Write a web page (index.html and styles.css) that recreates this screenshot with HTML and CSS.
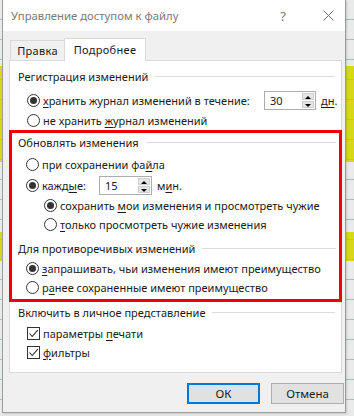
FILE: index.html
```html
<!DOCTYPE html>
<html lang="ru">
<head>
<meta charset="utf-8">
<link rel="stylesheet" href="styles.css">
</head>
<body>
<div class="dialog">
  <div class="titlebar">
    <span class="title">Управление доступом к файлу</span>
    <span class="help">?</span>
    <svg class="close" width="11" height="11" viewBox="0 0 11 11"><path d="M0.5 0.5 L10.5 10.5 M10.5 0.5 L0.5 10.5" stroke="#6b6b6b" stroke-width="1" fill="none"/></svg>
  </div>
  <div class="tabs">
    <div class="tab">Правка</div>
    <div class="tab active">Подробнее</div>
  </div>
  <div class="panel">
    <div class="group"><span>Регистрация изменений</span><i></i></div>
    <div class="row r1">
      <span class="opt w-keep"><b class="radio on"></b><span><u>х</u>ранить журнал изменений в течение:</span></span>
      <span class="spin s-days"><span class="val">30</span><span class="btns"><span class="up"></span><span class="dn"></span></span></span>
      <span class="unit"><u>дн</u>.</span>
    </div>
    <div class="row r2"><span class="opt"><b class="radio"></b><span>не хранить <u>ж</u>урнал изменений</span></span></div>

    <div class="mark">
      <div class="group g2"><span>Обновлять изменения</span><i></i></div>
      <div class="row ra"><span class="opt"><b class="radio"></b><span>при сохранении фа<u>й</u>ла</span></span></div>
      <div class="row rb">
        <span class="opt w-each"><b class="radio on"></b><span>кажд<u>ы</u>е:</span></span>
        <span class="spin s-min"><span class="val">15</span><span class="btns"><span class="up"></span><span class="dn"></span></span></span>
        <span class="unit">м<u>и</u>н.</span>
      </div>
      <div class="row sub"><span class="opt"><b class="radio on"></b><span>сохранить <u>м</u>ои изменения и просмотреть чужие</span></span></div>
      <div class="row sub"><span class="opt"><b class="radio"></b><span><u>т</u>олько просмотреть чужие изменения</span></span></div>
      <div class="group g3"><span>Для противоречивых изменений</span><i></i></div>
      <div class="row rc"><span class="opt"><b class="radio on"></b><span><u>з</u>апрашивать, чьи изменения имеют преимущество</span></span></div>
      <div class="row rd"><span class="opt"><b class="radio"></b><span>р<u>а</u>нее сохраненные имеют преимущество</span></span></div>
    </div>

    <div class="group g4"><span>Включить в личное представление</span><i></i></div>
    <div class="row c1"><span class="opt"><b class="check"><svg width="11" height="11" viewBox="0 0 11 11"><path d="M1.5 5.5 L4.2 8.5 L9.8 2.2" stroke="#2b2b2b" stroke-width="1.1" fill="none"/></svg></b><span>параметры <u>п</u>ечати</span></span></div>
    <div class="row c2"><span class="opt"><b class="check"><svg width="11" height="11" viewBox="0 0 11 11"><path d="M1.5 5.5 L4.2 8.5 L9.8 2.2" stroke="#2b2b2b" stroke-width="1.1" fill="none"/></svg></b><span><u>ф</u>ильтры</span></span></div>
  </div>
  <div class="buttons">
    <button class="btn default">ОК</button>
    <button class="btn">Отмена</button>
  </div>
</div>
</body>
</html>
```
FILE: styles.css
```css
* { box-sizing: border-box; }
html, body { margin: 0; padding: 0; }
body {
  width: 354px;
  height: 416px;
  overflow: hidden;
  font-family: "Noto Sans", "Open Sans", sans-serif;
  font-size: 11px;
  color: #1b1b1b;
  background:
    repeating-linear-gradient(to bottom, transparent 0 19px, #a9bfae 19px 20px),
    linear-gradient(to bottom, transparent 0 66px, #d7d71c 66px 162px, transparent 162px 232px, #d7d71c 232px 261px, transparent 261px),
    #e9ebea;
}
.dialog {
  margin-left: 2px;
  width: 344px;
  height: 413px;
  background: #f0f0f0;
  border: 1px solid #9c9c9c;
  border-top: none;
  box-shadow: 1px 1px 2px rgba(0,0,0,0.15);
}
.titlebar {
  height: 31px;
  background: #fff;
  display: flex;
  align-items: center;
  padding-left: 8px;
}
.title { color: #7a7a7a; font-size: 11.3px; flex: 1; }
.help { color: #7a7a7a; font-size: 13px; margin-right: 37px; }
.close { margin-right: 11px; }
.tabs {
  display: flex;
  align-items: flex-end;
  padding-left: 7px;
  height: 29px;
}
.tab {
  height: 20px;
  width: 54px;
  border: 1px solid #d9d9d9;
  border-right: none;
  border-bottom: none;
  display: flex;
  align-items: center;
  justify-content: center;
  letter-spacing: 0.3px;
}
.tab.active {
  height: 23px;
  width: 82px;
  background: #fff;
  border-right: 1px solid #d9d9d9;
  margin-bottom: -1px;
  position: relative;
  z-index: 1;
  align-items: flex-start;
  padding-top: 3px;
}
.panel {
  margin-left: 6px;
  width: 333px;
  height: 313px;
  background: #fff;
  border: 1px solid #d9d9d9;
  padding: 5px 0 0 0;
}
.group {
  display: flex;
  align-items: center;
  height: 20px;
  padding: 0 6px 0 8px;
}
.group i {
  flex: 1;
  height: 1px;
  background: #dcdcdc;
  margin-left: 7px;
  margin-top: 1px;
}
.row {
  display: flex;
  align-items: center;
  height: 20px;
  padding-left: 17px;
}
.r1 { margin-top: 4px; }
.opt { display: flex; align-items: center; white-space: nowrap; }
.opt > span { margin-left: 3px; }
.w-keep { width: 237px; }
.w-each { width: 73px; }
.radio {
  width: 13px;
  height: 13px;
  border: 1px solid #333;
  border-radius: 50%;
  background: #fff;
  display: flex;
  align-items: center;
  justify-content: center;
  flex: none;
}
.radio.on::after {
  content: "";
  width: 7px;
  height: 7px;
  border-radius: 50%;
  background: #333;
}
.check {
  width: 13px;
  height: 13px;
  border: 1px solid #333;
  background: #fff;
  display: flex;
  align-items: center;
  justify-content: center;
  flex: none;
}
.check svg { display: block; }
.spin {
  display: flex;
  align-items: stretch;
  border: 1px solid #adadad;
  background: #fff;
  height: 19px;
  padding: 1px;
  flex: none;
}
.s-days { width: 52px; }
.s-min { width: 53px; height: 19px; }
.spin .val { flex: 1; padding-left: 4px; line-height: 15px; }
.btns { width: 12px; display: flex; flex-direction: column; gap: 1px; }
.btns span {
  flex: 1;
  background: #e5e5e5;
  border: 1px solid #cfcfcf;
  position: relative;
}
.btns .up::after, .btns .dn::after {
  content: "";
  position: absolute;
  left: 2px;
  border-left: 3px solid transparent;
  border-right: 3px solid transparent;
}
.btns .up::after { top: 2px; border-bottom: 3px solid #000; }
.btns .dn::after { top: 2px; border-top: 3px solid #000; }
.unit { margin-left: 5px; }
.mark {
  margin: 0 -1px;
  border: 3px solid #f00000;
  padding: 0 0 2px 0;
}
.mark .group { height: 18px; padding-left: 6px; padding-right: 3px; }
.mark .row { padding-left: 14px; }
.mark .ra { margin-top: 3px; }
.mark .rb { margin-top: 1px; }
.mark .sub { padding-left: 32px; height: 19px; }
.mark .rb + .sub { margin-top: 1px; }
.mark .g3 { margin-top: 4px; height: 20px; }
.mark .rc { margin-top: 1px; height: 19px; }
.mark .rd { height: 19px; }
.g4 { height: 20px; }
.c1 { margin-top: 1px; }
.c2 { height: 19px; }
.buttons {
  display: flex;
  justify-content: flex-end;
  gap: 11px;
  margin-top: 10px;
  padding-right: 1px;
}
.btn {
  width: 73px;
  height: 21px;
  background: #e1e1e1;
  border: 1px solid #adadad;
  font-family: "Noto Sans", "Open Sans", sans-serif;
  font-size: 11.5px;
  color: #1b1b1b;
  padding: 0;
}
.btn.default { border: 2px solid #0078d7; }
u { text-decoration-thickness: 1px; text-underline-offset: 2px; }
```
